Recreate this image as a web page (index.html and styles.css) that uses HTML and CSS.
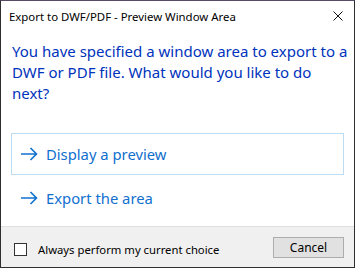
FILE: index.html
```html
<!DOCTYPE html>
<html lang="en">
<head>
    <meta charset="UTF-8">
    <title>Export to DWF/PDF - Preview Window Area</title>
    <link rel="stylesheet" href="styles.css">
</head>
<body>

<div class="janela">
    <div class="titulo">
        <span class="tituloTexto">Export to DWF/PDF - Preview Window Area</span>
        <svg class="fechar" width="10" height="10" viewBox="0 0 10 10">
            <path d="M0.5 0.5 L9.5 9.5 M9.5 0.5 L0.5 9.5" stroke="#111" stroke-width="1" fill="none"/>
        </svg>
    </div>

    <div class="conteudo">
        <p class="instrucao">You have specified a window area to export to a DWF or PDF file. What would you like to do next?</p>

        <!-- Opcoes -->
        <div class="link ativo">
            <svg class="seta" width="18" height="14" viewBox="0 0 18 14">
                <path d="M1 7 H16.5 M10.5 1 L16.5 7 L10.5 13" stroke="#1170cf" stroke-width="1.6" fill="none"/>
            </svg>
            <span>Display a preview</span>
        </div>
        <div class="link">
            <svg class="seta" width="18" height="14" viewBox="0 0 18 14">
                <path d="M1 7 H16.5 M10.5 1 L16.5 7 L10.5 13" stroke="#1170cf" stroke-width="1.6" fill="none"/>
            </svg>
            <span>Export the area</span>
        </div>
    </div>

    <div class="rodape">
        <label class="opcaoSempre">
            <span class="caixa"></span>
            Always perform my current choice
        </label>
        <button class="botao">Cancel</button>
    </div>
</div>

</body>
</html>
```

FILE: styles.css
```css
body {
    margin: 0;
    font-family: "Noto Sans", "Open Sans", sans-serif;
    background: #3a3a3a;
}
.janela {
    width: 353px;
    height: 266px;
    border: 1px solid #2f2f2f;
    border-top-color: #5b4a66;
    background: white;
    display: flex;
    flex-direction: column;
}
.titulo {
    height: 30px;
    display: flex;
    align-items: center;
    justify-content: space-between;
    padding: 0 11px 0 8px;
    font-size: 11.4px;
    color: #000;
}
.fechar {
    margin-top: -1px;
}
.conteudo {
    flex: 1;
    padding: 10px 10px 0 10px;
}
.instrucao {
    margin: 0 -6px 29px 1px;
    font-size: 15px;
    line-height: 21px;
    color: #0033bc;
}
.link {
    display: flex;
    align-items: center;
    height: 40px;
    padding-left: 8px;
    border: 1px solid transparent;
    font-size: 14.8px;
    color: #1170cf;
}
.link.ativo {
    border-color: #bcdcf4;
    margin-bottom: 2px;
}
.seta {
    margin-right: 8px;
}
.rodape {
    height: 40px;
    background: #f0f0f0;
    border-top: 1px solid #dfdfdf;
    display: flex;
    align-items: center;
    justify-content: space-between;
    padding: 0 10px 0 13px;
    font-size: 11.3px;
}
.opcaoSempre {
    display: flex;
    align-items: center;
    color: #000;
    margin-top: 5px;
}
.caixa {
    width: 11px;
    height: 11px;
    border: 1px solid #333;
    background: white;
    margin-right: 11px;
}
.botao {
    width: 71px;
    height: 21px;
    background: #e1e1e1;
    border: 1px solid #adadad;
    font-family: "Noto Sans", "Open Sans", sans-serif;
    font-size: 12px;
    color: #000;
    padding: 0;
}
```
